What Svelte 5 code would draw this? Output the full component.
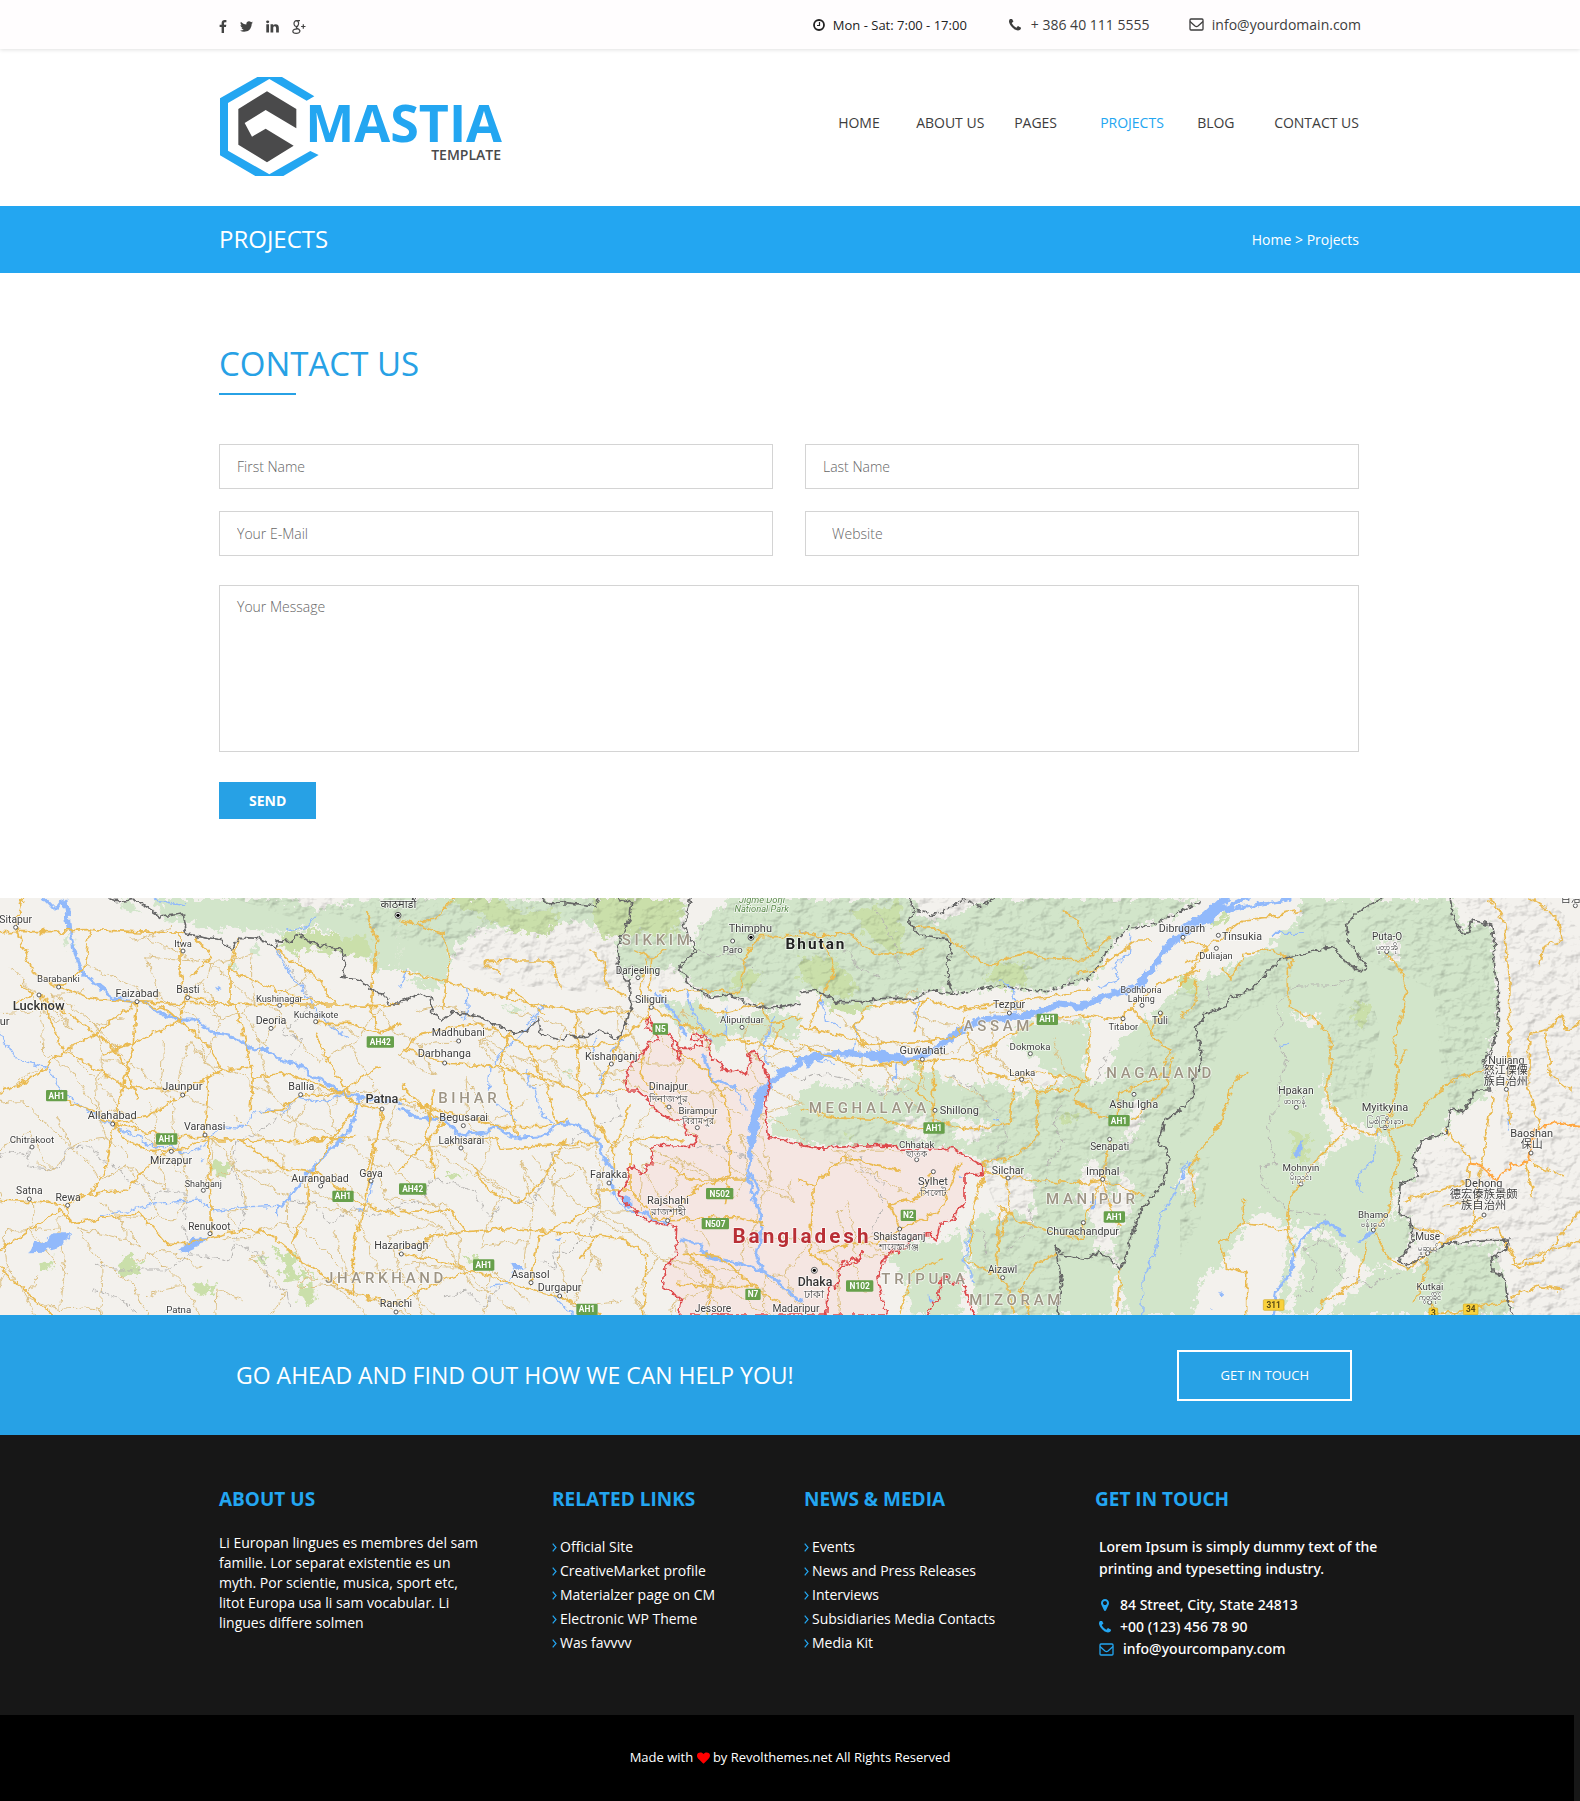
<script>
  const nav = ['HOME', 'ABOUT US', 'PAGES', 'PROJECTS', 'BLOG', 'CONTACT US'];
  const related = ['Official Site', 'CreativeMarket profile', 'Materialzer page on CM', 'Electronic WP Theme', 'Was favvvv'];
  const news = ['Events', 'News and Press Releases', 'Interviews', 'Subsidiaries Media Contacts', 'Media Kit'];

  const icons = {
    facebook: 'M1343 12v264h-157q-86 0-116 36t-30 108v189h293l-39 296h-254v759h-306v-759h-255v-296h255v-218q0-186 104-288.500t277-102.500q147 0 228 12z',
    twitter: 'M1684 408q-67 98-162 167 1 14 1 42 0 130-38 259.500t-115.500 248.500-184.500 210.500-258 146-323 54.500q-271 0-496-145 35 4 78 4 225 0 401-138-105-2-188-64.500t-114-159.500q33 5 61 5 43 0 85-11-112-23-185.500-111.500t-73.500-205.500v-4q68 38 146 41-66-44-105-115t-39-154q0-88 44-163 121 149 294.500 238.500t371.500 99.500q-8-38-8-74 0-134 94.500-228.500t228.500-94.500q140 0 236 102 109-21 205-78-37 115-142 178 93-10 186-50z',
    linkedin: 'M365 1414h231v-694h-231v694zm246-908q-1-52-36-86t-93-34-94.500 34-36.500 86q0 51 35.500 85.500t92.500 34.500h1q59 0 95-34.500t36-85.500zm585 908h231v-398q0-154-73-233t-193-79q-136 0-209 117h2v-101h-231q3 66 0 694h231v-388q0-38 7-56 15-35 45-59.500t74-24.500q116 0 116 157v371z',
    phone: 'M1600 1240q0 27-10 70.500t-21 68.500q-21 50-122 106-94 51-186 51-27 0-53-3.500t-57.500-12.500-47-14.500-55.500-20.500-49-18q-98-35-175-83-127-79-264-216t-216-264q-48-77-83-175-3-9-18-49t-20.500-55.500-14.500-47-12.500-57.500-3.500-53q0-92 51-186 56-101 106-122 25-11 68.500-21t70.500-10q14 0 21 3 18 6 53 76 11 19 30 54t35 63.500 31 53.500q3 4 17.500 25t21.500 35.500 7 28.500q0 20-28.500 50t-62 55-62 53-28.500 46q0 9 5 22.500t8.500 20.500 14 24 11.500 19q76 137 174 235t235 174q2 1 19 11.500t24 14 20.500 8.500 22.500 5q18 0 46-28.500t53-62 55-62 50-28.500q14 0 28.500 7t35.500 21.500 25 17.500q25 15 53.500 31t63.500 35 54 30q70 35 76 53 3 7 3 21z',
    marker: 'M1152 640q0-106-75-181t-181-75-181 75-75 181 75 181 181 75 181-75 75-181zm256 0q0 109-33 179l-364 774q-16 33-47.500 52t-67.500 19-67.500-19-46.500-52l-365-774q-33-70-33-179 0-212 150-362t362-150 362 150 150 362z',
    heart: 'M896 1664q-26 0-44-18l-624-602q-10-8-27.500-26t-55.500-65.500-68-97.500-53.500-121-23.500-138q0-220 127-344t351-124q62 0 126.500 21.500t120 58 95.500 68.500 76 68q36-36 76-68t95.500-68.500 120-58 126.500-21.500q224 0 351 124t127 344q0 221-229 450l-623 600q-18 18-44 18z'
  };

  // The map canvas is split in four sheets; every sheet lists its shapes in its own coordinates.
  const sheets = [
    {
      x: 0,
      green: ['460,24 840,24 900,40 960,60 1060,30 1200,24 1200,240 1130,240 1100,200 1040,150 960,110 880,120 800,130 700,110 640,120 580,100 500,90', '190,150 210,140 215,165 195,170', '750,170 775,165 780,190 755,195', '690,215 705,215 710,240 695,240', '360,30 400,40 420,70 370,60'],
      forest: ['840,130 950,120 1020,140 1110,140 1115,205 1030,195 940,175 890,190 850,175', '632,815 660,810 690,820 688,855 645,860', '352,1130 380,1090 425,1120 420,1145 365,1155', '572,1180 620,1180 655,1205 600,1215', '115,1125 165,1105 150,1145 120,1140', '820,1075 890,1100 885,1140 960,1160 870,1170 835,1150 850,1120', '895,1190 940,1180 945,1230 915,1250', '765,1100 795,1095 790,1120'],
      hills: ['700,24 1200,24 1200,150 1100,110 1000,70 900,90 800,60'],
      lake: ['85,1090 100,1060 140,1050 160,1030 212,1030 190,1065 150,1075 130,1088', '535,1085 570,1045 625,1040 600,1070 555,1088', '645,290 668,300 655,307', '600,810 614,812 606,818', '190,40 205,24 215,130 200,120'],
      river: ['130,24 165,60 190,30 210,130 225,190 250,250 300,295 340,325 400,335 440,340 480,370 540,390 590,390 640,430 700,440 760,480 800,475 850,515 890,520 930,555 1000,590 1030,612 1100,625 1200,640', '1075,625 1050,720 980,790 930,840 880,910 850,945'],
      stream: ['0,430 50,510 140,530 180,600 260,660 340,705 380,730 420,740 450,770 510,770 560,790 610,770 660,710 720,715 760,670 800,655 850,665 890,620 960,640 1030,612', '850,945 750,950 640,965 600,930 470,940 300,980', '830,180 860,240 910,300 960,380 1000,410 1050,445', '860,120 920,110 950,80', '1115,870 1110,920 1080,960', '830,945 830,980', '460,30 560,45'],
      border: ['330,24 360,35 400,28 485,80 550,72 560,132 610,140 665,150 695,180 718,142 775,145 832,175 828,152 870,155 893,130 935,160 1020,178 1038,215 1028,262 1080,270 1130,310 1150,312 1165,342 1200,342'],
      state: ['0,800 30,785 75,800 95,770 80,830 180,840 200,775 280,770 300,810 350,830 380,870 430,890 460,930 480,900 560,910 550,1000 570,1090', '740,950 700,840 710,760 830,690 890,630', '835,190 870,240 940,330 880,400 840,430 910,450 870,500', '280,1120 340,1140 500,1140 570,1095 690,1110 720,1000 740,950', '870,930 940,940 990,1005 1060,950 1110,980 1200,950', '280,1200 350,1220 420,1275', '710,1060 790,1100 810,1190 860,1200 870,1260'],
      road: ['45,115 70,24', '47,112 100,250 175,290 290,330 410,335 530,340 690,342 860,345 1000,345 1130,350 1200,340', '117,315 190,480 380,590 540,600', '0,125 160,125 270,118 400,125 550,130', '270,118 255,240 175,290', '117,315 215,380 350,480 420,630', '410,335 400,460 370,590 340,700', '411,335 290,430 190,485 90,570 0,605', '411,335 500,360 620,460 665,540 560,600 548,615 440,680 340,700', '540,130 540,240 560,320 540,390 400,460 310,490', '565,320 710,345 740,480 760,560 750,660', '690,340 690,240 710,150', '170,620 270,660 340,700 420,720 520,740 615,740 720,750 840,830 960,850 1060,930 1200,980', '615,740 625,560 665,540 760,530', '340,700 380,750 440,780 515,785 615,750 720,750', '340,700 320,830 270,910 200,945 90,935 0,930', '270,910 380,900 440,830 520,780', '200,945 215,1000 420,970 500,1060 560,1060 750,1015 825,1045 900,1110 1060,1215 1200,1240', '0,1080 180,960 215,1000', '625,740 630,860 635,1030', '1140,530 1030,605 1060,640 1150,660', '950,400 1050,400 1140,430 1200,400', '1140,430 1110,350 1130,150 1100,60', '690,240 830,300 980,345', '830,180 960,270 1000,340', '760,560 860,550 1030,610 900,615 840,660 780,665', '1060,660 990,760 930,860 920,960 880,1050', '1145,660 1110,860 1060,1080 1060,1215', '50,340 100,310 60,280', '590,150 640,200 570,260', '720,750 900,755 1060,740', '0,1135 90,1215 160,1275', '1150,670 1100,850', '1045,605 980,510 950,430'],
      labels: [['Sitapur', 47, 87, 31], ['Itwa', 549, 159, 28], ['Barabanki', 175, 265, 29], ['Lucknow', 116, 350, 39], ['ur', 14, 393, 33], ['Faizabad', 411, 309, 32], ['Basti', 564, 298, 31], ['Kushinagar', 838, 325, 28], ['Kuchaikote', 948, 373, 27], ['Deoria', 813, 390, 32], ['Jaunpur', 547, 590, 33], ['Allahabad', 337, 676, 33], ['Ballia', 904, 589, 32], ['Patna', 1146, 627, 38], ['Varanasi', 614, 709, 32], ['Chitrakoot', 96, 748, 29], ['Mirzapur', 513, 811, 32], ['Shahganj', 610, 880, 27], ['Aurangabad', 960, 864, 32], ['Gaya', 1113, 849, 32], ['Satna', 88, 902, 31], ['Rewa', 204, 921, 31], ['Renukoot', 628, 1008, 30], ['Hazaribagh', 1204, 1065, 32], ['Ranchi', 1188, 1241, 32], ['Patna', 536, 1258, 29], ['काठमाडौं', 1195, 42, 33]],
      regions: [['JHARKHAND', 1153, 1164]],
      dots: [[47, 112], [549, 183], [176, 291], [117, 315], [411, 335], [563, 323], [839, 346], [947, 395], [813, 415], [548, 615], [338, 702], [902, 614], [1146, 657], [615, 735], [96, 771], [514, 784], [610, 901], [962, 888], [1113, 873], [88, 927], [203, 946], [630, 1031], [1204, 1092], [1188, 1266]],
      capitals: [[1194, 76]],
      shields: [['AH1', 170, 617], ['AH42', 1141, 456], ['AH1', 500, 747], ['AH1', 1029, 919]]
    },
    {
      x: 1200,
      green: ['0,24 850,24 850,110 880,180 840,230 700,260 660,240 650,120 500,90 400,130 250,110 160,180 140,280 0,240', '840,230 880,180 900,100 1000,24 1200,24 1200,345 1100,355 1030,325 930,320 870,285', '300,350 380,350 360,370', '20,270 120,270 120,305 60,290', '780,330 900,340 1000,400 1080,360 1200,380 1200,440 1080,450 990,430 960,480 900,430 830,400', '1120,690 1200,640 1200,755 1110,735', '490,540 515,540 505,555'],
      forest: ['130,24 290,24 340,60 490,70 450,140 330,120 200,60', '580,24 850,24 840,110 790,150 720,120 660,145 590,130', '130,850 205,855 180,870 130,862', '180,1100 230,1095 235,1110 190,1115', '1000,240 1080,250 1050,300 1000,290', '1160,900 1180,900 1180,920 1160,920'],
      hills: ['0,24 870,24 850,110 890,180 840,230 800,300 690,280 600,310 480,300 300,280 220,240 120,180 0,150', '840,230 880,180 900,100 1000,24 1200,24 1200,345 1100,355 1030,325 930,320 870,285'],
      lake: ['665,915 690,920 692,955 675,945', '330,1115 375,1130 345,1145', '1070,600 1100,580 1080,680 1062,780 1052,750', '465,1045 485,1040 478,1060'],
      river: ['0,660 60,685 130,690 180,735 260,725 290,710 340,745 430,740 480,700 540,710 595,750 610,800 635,840 640,910', '730,970 800,1005', '840,1050 900,1065 920,1100 1000,1115 1080,1140 1130,1170 1200,1230', '1050,790 1045,870 1065,930 1085,980 1080,1050 1070,1100 1085,1140', '1060,930 1075,900 1050,850', '910,500 940,570 1000,590', '770,310 830,380 860,440'],
      wide: ['1200,525 1140,550 1100,590 1075,640 1060,700 1050,790'],
      stream: ['640,910 680,960 730,970', '430,345 400,390 360,440 310,480 280,520', '430,345 380,400', '860,300 880,370 930,450', '1000,590 1040,660', '200,290 205,360 190,390', '980,350 975,440', '0,290 20,240', '380,540 390,590 410,600 420,670 460,700', '270,530 265,600', '290,640 350,685', '1100,520 1090,470 1120,380', '590,440 580,490', '610,550 595,620', '450,1210 520,1275', '270,1190 330,1180 340,1140', '640,480 670,450'],
      border: ['0,335 65,310 95,330 95,370 125,390 160,365 240,380 340,430 385,422 415,385 425,435 485,450 500,435 555,440 600,420 655,448 680,400 695,340 690,280 655,240 655,170 690,80 695,40 650,24', '425,24 440,42 500,38 585,48 600,24', '870,24 850,110 890,180 840,230 865,280 930,322 985,315 1055,345 1105,355 1200,340'],
      state: ['0,940 70,940 90,870 160,880 220,900 270,985 310,930 400,935 440,860 460,790 560,720', '570,1030 600,930 590,860', '560,1030 500,1090 460,1080 470,1140 420,1110', '600,700 660,680 650,620 590,600', '890,770 960,770 1050,810', '130,1220 200,1200 250,1250 300,1190', '900,180 940,200 1000,190 1060,240', '910,110 900,150'],
      road: ['0,90 50,105 110,80 160,24', '50,105 130,130 150,200 140,260 130,360', '0,240 140,275 330,330 540,365 690,365', '0,495 60,430 240,400 390,470 540,470 650,460', '20,480 150,520 290,530 480,580 540,610 680,600', '330,430 300,520 340,680 350,740', '385,470 440,590 470,700', '530,370 530,470 540,610 590,700 640,780 640,860', '750,300 755,205 700,180', '755,205 800,180', '740,210 720,300 755,350 740,380 660,450 600,600', '755,350 840,400 1000,450 1080,460 1200,500', '780,300 1020,305 1040,190 1080,140 1200,140', '900,350 960,370 1080,340 1110,400 1200,380', '0,630 120,660 290,710 440,710 500,690', '10,590 100,680 130,700 0,840', '180,750 290,740 300,780 500,760 600,760', '220,830 260,900 360,940 430,870 500,750', '0,965 150,960 200,1025 330,1015 570,1035 680,1050 740,1100 730,1275', '0,1080 100,1040 200,1025', '0,1090 150,1120 330,1180 480,1220 600,1275', '390,1180 420,1040 600,940 590,900 690,900 760,980 800,990', '690,900 690,760 740,740 850,750', '690,650 640,780', '800,650 720,550 730,500', '830,480 920,540 980,630 990,740 985,860 970,940', '800,990 1000,980 1090,1000', '805,990 880,900 985,860', '810,830 880,870 985,870 1040,870', '850,1090 960,1100 1050,1180 1140,1240', '830,1180 920,1190 1050,1190', '920,1275 940,1160 860,1090', '1110,480 1150,400', '570,180 610,220 620,290 680,320', '300,250 250,220 330,210 450,210 480,290', '100,600 80,730 110,870', '320,330 330,300 430,370', '0,1240 100,1180 250,1130', '540,1110 590,1040'],
      labels: [['Madhubani', 175, 428, 32], ['Darbhanga', 133, 490, 33], ['Begusarai', 191, 682, 33], ['Lakhisarai', 184, 750, 30], ['Kishanganj', 634, 498, 32], ['Siliguri', 753, 328, 32], ['Darjeeling', 714, 240, 30], ['Thimphu', 1051, 114, 33], ['Paro', 998, 178, 29], ['Alipurduar', 1026, 389, 29], ['Dinajpur', 805, 590, 32], ['দিনাজপুর', 805, 624, 31], ['Birampur', 894, 661, 29], ['বিরামপুর', 893, 690, 27], ['Farakka', 626, 854, 32], ['Rajshahi', 804, 932, 33], ['রাজশাহী', 804, 965, 31], ['Asansol', 391, 1152, 32], ['Durgapur', 479, 1192, 32], ['Jessore', 939, 1254, 31], ['Madaripur', 1188, 1256, 31]],
      parks: [['Jigme Dorji', 1086, 29], ['National Park', 1085, 56]],
      regions: [['BIHAR', 203, 624], ['SIKKIM', 768, 148]],
      dots: [[176, 453], [134, 519], [190, 707], [183, 774], [634, 522], [754, 352], [714, 263], [998, 153], [1026, 412], [807, 651], [892, 713], [627, 879], [803, 992], [393, 1178], [479, 1218]],
      capitals: [[1053, 142]],
      shields: [['AH42', 38, 897], ['N5', 781, 417], ['N502', 959, 911], ['N507', 946, 1001], ['AH1', 251, 1125], ['AH1', 561, 1258], ['N7', 1059, 1213]]
    },
    {
      x: 2400,
      green: ['0,24 1200,24 1100,90 985,110 930,170 885,260 740,305 600,290 460,312 400,300 340,325 110,335 50,300 0,305', '0,600 60,580 130,590 200,570 260,610 330,560 400,540 470,590 600,580 660,610 690,590 780,600 800,560 740,540 700,500 620,450 680,400 860,390 870,450 850,560 880,590 920,560 960,450 1060,370 1140,290 1140,1275 980,1275 940,1060 930,900 880,800 850,830 820,1000 700,1040 700,870 620,820 560,820 460,775 280,770 0,765', '500,1010 560,960 600,1000 640,960 700,1000 760,1060 780,1275 530,1275 510,1130', '270,1100 330,1060 420,1060 480,1020 500,1100 480,1275 330,1275 320,1180', '60,320 230,330 190,365 90,360', '700,940 850,940 950,1140 930,1275 770,1275 720,1040'],
      forest: ['160,60 300,40 310,200 220,160', '560,260 600,215 680,230 680,280 620,300', '0,200 100,200 180,300 140,330 0,270', '90,340 225,345 190,370 90,365', '800,660 830,680 800,710 780,690', '185,775 235,775 230,795 185,790', '300,865 315,880 300,895', '340,520 370,520 360,555', '135,740 160,740 150,760'],
      hills: ['0,24 1180,24 1100,90 985,110 930,170 885,260 740,295 600,285 460,305 400,300 340,325 110,335 50,300 0,305', '480,620 700,600 760,560 830,640 960,560 1060,400 1140,300 1140,680 1095,700 1070,765 1105,790 1080,900 1030,960 962,1135 860,1108 780,1100 780,1275 540,1275 520,1130 600,980 540,830', '0,680 260,700 350,640 460,700 460,770 0,765'],
      bare: ['340,24 560,24 480,70 400,100 345,60', '300,690 370,680 400,700 380,760 280,715', '470,690 560,700 575,720 520,755 460,750', '640,560 690,590 660,620 620,600', '880,1080 895,1000 930,960 960,850 1000,880 990,960 920,1080', '870,590 905,450 945,460 920,560', '600,870 640,880 650,960 620,980 560,950', '1000,640 1040,640 1010,720 960,800'],
      lake: ['0,505 60,480 75,500 20,530', '230,480 300,490 310,515 240,520', '865,935 885,930 885,955 870,955', '475,860 485,858 482,868', '1010,270 1060,225 1070,240 1020,295', '385,1215 400,1230 390,1235'],
      wide: ['0,510 60,495 150,490 250,500 330,512 400,480 470,430 540,388 640,383 720,365 780,340 840,350 900,325 960,305 1020,285 1060,230 1110,160 1160,120 1240,70 1340,24'],
      stream: ['600,270 640,300 650,380', '990,130 985,190 940,230 960,270 900,290', '60,320 80,390 120,410', '170,400 160,480', '360,330 340,400', '100,520 0,500', '290,520 280,570', '1150,840 1130,900 1110,885', '1130,900 1080,980 1070,1080 1030,1160 1025,1275', '580,690 600,685', '515,1000 495,1110 520,1180'],
      border: ['0,308 50,300 110,335 200,335 250,325 340,325 400,300 460,312 440,250 445,195 460,190 440,145 360,135 325,95 345,60 325,24', '1140,660 1095,690 1070,765 1105,780 1100,850 1080,890 1030,950 1000,1020 985,1080 962,1135 900,1085 860,1108 795,1100 765,1065 775,1110 785,1180 770,1275'],
      dashed: ['460,312 600,288 740,305 870,262 885,240 930,170 985,115 1060,105 1200,35', '345,60 410,75 490,30 540,50 580,24'],
      state: ['0,570 60,550 150,570 240,610 340,600', '450,560 520,590 600,690 620,750 580,790', '180,800 190,840 250,880 240,980 210,1030', '880,590 930,480', '780,650 760,700 790,760 740,830 740,890', '500,1020 550,1020 560,1090', '690,960 700,1010 620,1080', '0,120 60,140 150,190 180,240 250,260', '230,60 280,150 300,240'],
      road: ['0,125 50,135 140,130 230,190 320,195 370,175', '60,135 105,240 60,330 30,410', '340,110 410,115 480,170 570,230 620,205 690,185 730,205 860,210 880,190 930,140', '790,60 830,90 870,180', '830,250 890,240 1010,150 1060,150', '0,410 90,430 200,460 370,455 470,440 500,380', '0,460 90,500 170,530 370,515 530,510 600,450 700,400', '185,380 200,350 380,330 480,360 560,355', '185,380 160,420 200,460', '370,330 340,430', '480,355 680,330 870,300', '720,390 860,375 950,390 1000,350 1080,280 1200,240', '530,510 550,540 640,570 700,540 790,560 850,570 820,630 900,680 960,690', '665,570 720,605 800,600 870,570', '550,540 600,560', '860,570 870,400', '640,590 630,700 520,720 400,690', '400,515 400,700 360,720 250,690 100,680 0,660', '370,515 350,600 400,650', '715,605 710,750 640,800 550,820 555,850', '555,850 700,870 840,880 905,870 1030,915', '555,860 520,940 510,1100', '620,870 630,950 590,1090', '905,870 850,1000 850,1050 740,1020 650,990 600,950 590,1160', '905,870 940,980 960,1010', '930,750 910,870', '950,690 960,610 1080,560 1110,480 1050,430 1085,370', '1000,690 1100,590 1120,500', '960,400 990,350 1060,430', '0,870 40,890 30,1090 100,1140', '40,890 130,800 300,845', '270,945 360,920 400,845', '270,945 300,1020 420,960 480,820', '300,1020 230,1060 150,1060 60,1090', '640,1275 620,1180 600,1160 500,1110', '690,1275 660,1200 700,1130 770,1090', '300,1270 340,1140 430,1110', '960,1140 950,1275', '500,430 530,490 600,450', '740,600 770,570'],
      labels: [['Tezpur', 627, 344, 32], ['Guwahati', 368, 482, 33], ['Dokmoka', 690, 470, 29], ['Lanka', 667, 546, 29], ['Shillong', 478, 662, 33], ['Chhatak', 350, 762, 29], ['ছাতক', 350, 790, 27], ['Sylhet', 399, 875, 33], ['সিলেট', 399, 907, 31], ['Silchar', 624, 840, 32], ['Shaistaganj', 298, 1040, 30], ['শায়েস্তাগঞ্জ', 298, 1070, 26], ['Dhaka', 45, 1176, 37], ['ঢাকা', 41, 1214, 32], ['Aizawl', 608, 1139, 30], ['Bodhboria', 1023, 298, 27], ['Lahing', 1024, 325, 27], ['Tuli', 1080, 391, 30], ['Titabor', 970, 408, 28], ['Ashu Igha', 1001, 643, 33], ['Senapati', 929, 769, 30], ['Imphal', 908, 843, 33], ['Churachandpur', 848, 1025, 32], ['Dibrugarh', 1146, 116, 32]],
      regions: [['ASSAM', 590, 408], ['MEGHALAYA', 203, 654], ['NAGALAND', 1077, 548], ['MANIPUR', 872, 925], ['TRIPURA', 370, 1167], ['MIZORAM', 645, 1230]],
      dots: [[628, 369], [367, 508], [691, 491], [665, 568], [405, 661], [350, 809], [400, 845], [624, 864], [299, 1017], [608, 1163], [1026, 346], [1081, 369], [969, 386], [1002, 613], [929, 748], [908, 868], [850, 998], [1149, 142]],
      capitals: [[43, 1141]],
      shields: [['AH1', 742, 388], ['AH1', 402, 714], ['AH1', 957, 692], ['N2', 325, 976], ['AH1', 943, 981], ['N102', 179, 1188]]
    },
    {
      x: 3540,
      green: ['360,24 820,24 850,130 875,95 935,110 945,220 955,400 910,515 935,600 850,665 810,655 800,730 730,750 700,800 715,858 660,885 655,970 690,985 700,1050 655,1110 560,1140 500,1060 420,1020 340,1000 320,1275 230,1275 190,1150 110,1130 60,1180 40,1275 0,1275 0,300 130,240 280,160 360,80', '780,1065 980,1060 935,1100 970,1160 995,1275 440,1275 520,1210 600,1130 700,1140', '380,1040 480,1060 500,1150 400,1275 340,1275 360,1150'],
      forest: ['520,345 550,335 570,370 540,415 520,380', '345,725 395,730 370,820 330,800', '80,100 140,75 140,100 100,110', '150,1190 165,1200 155,1205', '0,250 50,270 40,300 0,300'],
      hills: ['0,300 130,250 280,180 340,190 330,320 200,360 120,450 60,700 0,760', '550,40 800,24 850,130 930,110 950,220 955,400 910,515 935,600 810,655 780,500 760,300 540,200', '820,24 1100,24 1200,120 1200,1100 1000,1150 960,700 1000,400 960,200', '700,800 860,760 960,900 1200,900 1200,1275 1000,1275 985,1050 800,1060 680,1110 655,970', '540,200 600,420 560,620 460,640 440,420', '0,820 90,800 60,1000 0,1100', '360,40 520,40 500,150 350,190', '700,1080 960,1060 980,1275 800,1275'],
      bare: ['600,160 660,150 665,210 620,200', '430,560 450,640 510,700 590,710 610,740 520,740 420,820 350,880 330,1000 350,880 460,760 430,680', '620,730 640,770 600,760', '40,1275 60,1170 120,1130 200,1000 240,960 310,1000 330,1010 290,1275', '0,860 50,840 40,900 0,900', '190,60 300,60 360,70 300,100 230,150 100,170 60,240 0,260 0,200', '320,370 420,380 400,410', '640,880 650,960 630,1000'],
      lake: ['345,805 348,775 362,752 372,752 362,795 352,808', '118,1210 125,1204 133,1211 125,1218', '88,1258 94,1254 98,1260', '583,725 600,722 592,740', '80,60 120,24 150,24 90,100 40,115'],
      wide: ['0,120 70,80 130,24'],
      river: ['540,1055 580,1020', '490,1040 460,1010 430,995 370,1040 345,1090 330,1150 290,1200 280,1275', '80,70 180,55 260,40 330,24'],
      stream: ['590,760 580,800 555,835 530,870 545,910', '0,860 20,820', '280,130 370,130', '985,680 985,720', '300,470 320,460', '0,870 30,820'],
      border: ['610,24 540,60 500,100 505,155 565,235 545,245 495,215 460,170 350,195 290,215 240,270 210,300 150,325 130,355 80,370 45,420 60,460 65,520 40,570 40,620 0,660', '810,24 825,95 848,130 865,128 875,90 935,105 945,170 940,220 955,300 955,400 935,480 910,515 935,600 890,600 850,665 810,655 800,730 730,750 700,800 715,858 660,885 655,970 690,985 700,1050 655,1110 680,1130 745,1090 800,1060 870,1055 985,1050 980,1080 935,1100 940,1145 970,1155 980,1210 995,1275'],
      state: ['345,285 450,285 530,260', '345,285 290,350 310,400 280,440 320,500 300,560 300,650 265,690 270,770 290,820 240,830 260,900 330,965 440,975 420,1050 370,1080 410,1120 400,1200 350,1220', '420,1050 500,1090 470,1150 570,1185 660,1150', '80,280 90,330'],
      road: ['620,190 660,240 680,310 660,390 640,460 655,540 640,650 620,710', '620,710 580,735 500,710 465,670 435,600 455,530 450,430 390,380 325,350 325,240 340,215 280,180 200,190 150,270 130,230', '620,720 660,790 635,890 630,960 585,1020', '585,1030 620,1100 680,1135 740,1095 780,1060 910,985', '560,1060 530,1180 430,1230 410,1275', '740,1110 730,1170 700,1230', '630,720 700,700 740,640 820,570 930,530', '500,720 420,800 330,920 320,1020', '200,545 160,580 120,700 30,830 50,950', '190,930 190,1000 320,1020 350,1100', '190,1000 120,1060 140,1130 200,1150 200,1275', '930,24 970,90 990,280 985,560 980,600 990,700', '1050,24 1130,80 1150,150 1090,170 1080,220', '1045,600 1050,430 1100,420 1145,370 1160,420 1200,400', '1045,590 1080,710', '670,930 860,880 870,800 800,720', '780,1060 860,1030 950,1010 1010,1120 1200,1050', '1000,1130 1080,1120 1200,960', '1060,820 1150,860', '1040,820 1060,920', '680,480 660,520', '0,150 80,170 0,290', '20,220 100,160 190,90 280,80 360,60', '700,1010 790,1030', '990,1220 1080,1190 1150,1200', '50,270 40,350 0,380', '870,930 790,950', '870,1040 940,620', '890,1250 1000,1230', '1100,430 1110,550 1170,600', '750,1275 750,1240 780,1270 860,1265'],
      highway: ['865,820 900,825 950,870 990,830 1050,815 1060,720 1120,700 1200,710'],
      labels: [['Tinsukia', 186, 138, 32], ['Duliajan', 108, 197, 28], ['Puta-O', 621, 138, 30], ['ပူတာအို', 621, 168, 25], ['Nujiang', 979, 510, 32], ['怒江傈僳', 977, 541, 33], ['族自治州', 977, 573, 33], ['Hpakan', 348, 600, 31], ['ဖားကန့်', 346, 632, 25], ['Myitkyina', 615, 652, 33], ['မြစ်ကြီးနား', 615, 690, 27], ['Baoshan', 1055, 730, 33], ['保山', 1055, 763, 33], ['Mohnyin', 363, 831, 29], ['မိုးညှင်း', 363, 860, 25], ['Dehong', 911, 879, 33], ['德宏傣族景颇', 911, 913, 34], ['族自治州', 911, 947, 34], ['Bhamo', 580, 973, 29], ['ဗန်းမော်', 580, 1000, 25], ['Muse', 743, 1040, 30], ['မူဆယ်', 743, 1073, 25], ['Kutkai', 750, 1189, 29], ['ကွတ်ခိုင်', 750, 1218, 25], ['自治', 1172, 24, 30]],
      regions: [],
      dots: [[115, 136], [109, 175], [620, 185], [979, 598], [349, 652], [615, 713], [1053, 789], [363, 882], [912, 975], [580, 1020], [743, 1090], [749, 1237], [1186, 47]],
      shields: [],
      yellow: [['311', 281, 1245], ['34', 872, 1258], ['3', 760, 1270]]
    }
  ];

  const country = 'M2035 1275L2045 1230 1990 1190 1995 1130 2030 1095 2028 1050 2030 1010 1975 1000 1940 990 1910 965 1875 940 1855 910 1870 890 1890 860 1885 835 1905 832 1920 850 1935 848 1940 825 1955 825 1960 765 2030 768 2080 770 2095 740 2060 735 2050 690 2015 690 1970 665 1940 625 1910 600 1880 600 1875 565 1895 520 1930 490 1945 460 1975 450 1960 420 1935 415 1950 375 1955 400 1970 430 1985 425 2020 440 2015 470 2030 480 2035 510 2042 490 2025 455 2045 475 2070 475 2085 465 2110 470 2105 450 2075 455 2080 430 2100 440 2110 428 2120 450 2130 450 2125 475 2135 505 2160 515 2170 540 2200 545 2215 540 2240 555 2240 530 2255 520 2245 490 2265 485 2290 520 2295 545 2310 580 2295 640 2305 740 2340 745 2400 765 2450 775 2550 770 2680 765 2700 778 2860 775 2890 795 2945 825 2950 855 2895 850 2895 940 2870 960 2865 985 2820 1000 2810 1050 2785 1030 2740 1040 2720 1070 2690 1085 2680 1080 2650 1105 2640 1150 2630 1160 2640 1200 2650 1240 2665 1275Z';
  const districts = 'M2780 1275L2800 1240 2815 1235 2820 1170 2840 1160 2860 1185 2885 1160 2905 1230 2925 1275M2480 1275L2485 1200 2515 1180 2520 1130 2540 1125 2550 1105 2570 1110 2590 1080 2570 1120 2550 1125 2530 1110 2520 1125';

  // Local lanes: a repeatable jittered mesh, dense on the plain and absent in the mountains.
  let seed = 7;
  const rand = () => {
    seed = (seed * 16807) % 2147483647;
    return seed / 2147483647;
  };
  const step = 92;
  const nodes = [];
  for (let r = 0; r < 15; r++) {
    nodes.push([]);
    for (let c = 0; c < 36; c++) {
      nodes[r].push([Math.round(c * step + (rand() - 0.5) * 84), Math.round(24 + r * step + (rand() - 0.5) * 84)]);
    }
  }
  const onPlain = (x, y) => {
    if (x < 1200) return y > 130 + Math.max(0, x - 800) / 2;
    if (x < 2000) return y > 340;
    if (x < 2640) return y > 350 && !(y > 560 && y < 770 && x > 2320);
    return y > 320 && y < 560 && x < 3300;
  };
  const lanes = [];
  for (let r = 0; r < 14; r++) {
    for (let c = 0; c < 35; c++) {
      const a = nodes[r][c];
      for (const b of [nodes[r][c + 1], nodes[r + 1][c], nodes[r + 1][c + 1]]) {
        const keep = rand() < 0.42;
        const bx = Math.round((a[0] + b[0]) / 2 + (rand() - 0.5) * 36);
        const by = Math.round((a[1] + b[1]) / 2 + (rand() - 0.5) * 36);
        if (keep && onPlain(a[0], a[1])) lanes.push(`M${a[0]} ${a[1]}Q${bx} ${by} ${b[0]} ${b[1]}`);
      }
    }
  }
  const lanePath = lanes.join('');
  const rank = (size) => (size > 35 ? 'big' : '');
</script>

{#snippet glyph(name, box = '0 0 1792 1792')}
  <svg class="glyph" viewBox={box} aria-hidden="true"><path d={icons[name]} /></svg>
{/snippet}

{#snippet envelope()}
  <svg class="glyph wide-glyph" viewBox="0 0 15 13" aria-hidden="true">
    <rect x="1" y="1" width="13" height="11" rx="1" fill="none" stroke="currentColor" stroke-width="1.3" />
    <path d="M1 3.500L6 8q1.500 1.200 3 0L14 3.500" fill="none" stroke="currentColor" stroke-width="1.300" />
  </svg>
{/snippet}

{#snippet lines(list, cls)}
  {#each list ?? [] as points}<polyline class={cls} {points} />{/each}
{/snippet}

{#snippet areas(list, cls)}
  {#each list ?? [] as points}<polygon class={cls} {points} />{/each}
{/snippet}

<div class="topbar">
  <div class="wrap bar">
    <div class="social">
      <a href="#facebook" aria-label="Facebook"><svg viewBox="479 0 864 1664" aria-hidden="true"><path d={icons.facebook} /></svg></a>
      <a href="#twitter" aria-label="Twitter"><svg class="w13" viewBox="108 256 1576 1280" aria-hidden="true"><path d={icons.twitter} /></svg></a>
      <a href="#linkedin" aria-label="LinkedIn"><svg class="w13" viewBox="340 370 1100 1060" aria-hidden="true"><path d={icons.linkedin} /></svg></a>
      <a href="#google" aria-label="Google Plus">
        <svg class="w14" viewBox="0 0 14 14" aria-hidden="true">
          <g fill="none" stroke="currentColor" stroke-width="1.2">
            <ellipse cx="4.300" cy="3.600" rx="2.300" ry="2.900" />
            <path d="M4 .7h4M6 6Q3 7.500 5.300 8.400T8 11Q7.500 13.400 4.200 13.400T.8 11.200Q1 9 5.600 8.800" />
            <path d="M11.300 4.300v4.400M9.100 6.500h4.400" />
          </g>
        </svg>
      </a>
    </div>
    <div class="contacts">
      <span class="hours">
        <svg class="glyph" viewBox="0 0 12 12" aria-hidden="true"><circle cx="6" cy="6" r="5" fill="none" stroke="currentColor" stroke-width="1.800" /><path d="M6.500 3v3.500H4" fill="none" stroke="currentColor" stroke-width="1.200" /></svg>
        Mon - Sat: 7:00 - 17:00
      </span>
      <span class="tel">{@render glyph('phone', '192 256 1408 1280')}+ 386 40 111 5555</span>
      <a href="mailto:info@yourdomain.com">{@render envelope()}info@yourdomain.com</a>
    </div>
  </div>
</div>

<header class="wrap header">
  <a class="logo" href="#home" aria-label="Mastia Template">
    <svg viewBox="0 0 283 100" aria-hidden="true">
      <g transform="scale(.3333) translate(-57 -231)">
        <path fill="#23a6f1" d="M60 295L172 231H246L343 289 320 302 208 237 84 309V452L208 523 331 453 356 465 250 528H166L60 466Z" />
        <path fill="#4a4a4b" d="M115 327L201 274 289 327V385L197 330 134 369 156 410 197 386 281 437 201 487 115 434Z" />
      </g>
      <text class="brand" x="283" y="65">MASTIA</text>
      <text class="tag" x="282" y="83">TEMPLATE</text>
    </svg>
  </a>
  <nav>
    {#each nav as item}
      <a href="#{item.toLowerCase().replace(' ', '-')}" class:active={item === 'PROJECTS'}>{item}</a>
    {/each}
  </nav>
</header>

<div class="titlebar">
  <div class="wrap bar">
    <h1>PROJECTS</h1>
    <div class="crumbs"><a href="#home">Home</a> &gt; <span>Projects</span></div>
  </div>
</div>

<main class="wrap">
  <h2>CONTACT US</h2>
  <form>
    <div class="pair">
      <input type="text" placeholder="First Name" aria-label="First Name" />
      <input type="text" placeholder="Last Name" aria-label="Last Name" />
      <input type="email" placeholder="Your E-Mail" aria-label="Your E-Mail" />
      <input class="site" type="url" placeholder="Website" aria-label="Website" />
    </div>
    <textarea placeholder="Your Message" aria-label="Your Message"></textarea>
    <button type="button">SEND</button>
  </form>
</main>

<svg class="map" viewBox="0 24 4740 1251" preserveAspectRatio="xMidYMid slice" role="img" aria-label="Map of Bangladesh and its neighbours">
  <defs>
    <filter id="relief" x="0" y="0" width="100%" height="100%" color-interpolation-filters="sRGB">
      <feTurbulence type="fractalNoise" baseFrequency="0.022 0.03" numOctaves="4" seed="4" result="noise" />
      <feDiffuseLighting in="noise" surfaceScale="9" diffuseConstant="1.2" lighting-color="#ffffff" result="light">
        <feDistantLight azimuth="225" elevation="58" />
      </feDiffuseLighting>
      <feComposite in="light" in2="SourceGraphic" operator="in" />
    </filter>
    <filter id="rough" x="-5%" y="-5%" width="110%" height="110%">
      <feTurbulence type="fractalNoise" baseFrequency="0.05" numOctaves="3" seed="9" />
      <feDisplacementMap in="SourceGraphic" scale="60" xChannelSelector="R" yChannelSelector="G" />
    </filter>
    <filter id="wiggle" x="-5%" y="-5%" width="110%" height="110%">
      <feTurbulence type="fractalNoise" baseFrequency="0.04" numOctaves="3" seed="2" />
      <feDisplacementMap in="SourceGraphic" scale="26" xChannelSelector="R" yChannelSelector="G" />
    </filter>
    <filter id="jagged" x="-5%" y="-5%" width="110%" height="110%">
      <feTurbulence type="fractalNoise" baseFrequency="0.06" numOctaves="2" seed="5" />
      <feDisplacementMap in="SourceGraphic" scale="22" xChannelSelector="R" yChannelSelector="G" />
    </filter>
  </defs>
  <rect class="land" x="0" y="0" width="4740" height="1300" />
  <g filter="url(#rough)">
    {#each sheets as s}<g transform="translate({s.x} 0)">{@render areas(s.green, 'green')}</g>{/each}
    {#each sheets as s}<g transform="translate({s.x} 0)">{@render areas(s.forest, 'forest')}{@render areas(s.bare, 'land')}</g>{/each}
  </g>
  <path class="country" d={country} />
  <g class="relief" filter="url(#relief)">
    {#each sheets as s}<g transform="translate({s.x} 0)">{@render areas(s.hills, 'hill')}</g>{/each}
  </g>
  <g filter="url(#wiggle)">
    <path class="lane" d={lanePath} />
    {#each sheets as s}
      <g transform="translate({s.x} 0)">
        {@render lines(s.state, 'state')}
        {@render lines(s.stream, 'stream')}
        {@render lines(s.river, 'river')}
        {@render lines(s.wide, 'wide')}
        {@render areas(s.lake, 'lake')}
        {@render lines(s.road, 'road')}
        {@render lines(s.highway, 'highway')}
      </g>
    {/each}
  </g>
  <g filter="url(#jagged)">
    <path class="outline" d={country} />
    <path class="outline" d={districts} />
    {#each sheets as s}
      <g transform="translate({s.x} 0)">
        {@render lines(s.border, 'border')}
        {@render lines(s.dashed, 'border dashed')}
      </g>
    {/each}
  </g>
  {#each sheets as s}
    <g transform="translate({s.x} 0)">
      {#each s.regions as [name, x, y]}<text class="region" x={x + 5} y={y + 16}>{name}</text>{/each}
      {#each s.dots as [cx, cy]}<circle class="dot" {cx} {cy} r="6" />{/each}
      {#each s.capitals ?? [] as [cx, cy]}
        <circle class="dot" {cx} {cy} r="9" /><circle {cx} {cy} r="5" />
      {/each}
      {#each s.parks ?? [] as [name, x, y]}<text class="park" {x} y={y + 9}>{name}</text>{/each}
      {#each s.labels as [name, x, y, size]}<text class="town {rank(size)}" {x} y={y + 11} font-size={size}>{name}</text>{/each}
      {#each s.shields as [name, x, y]}
        <rect class="shield" x={x - name.length * 9 - 5} y={y - 17} width={name.length * 18 + 10} height="34" rx="4" />
        <text class="code" {x} y={y + 9}>{name}</text>
      {/each}
      {#each s.yellow ?? [] as [name, x, y]}
        <rect class="plate" x={x - name.length * 9 - 4} y={y - 16} width={name.length * 18 + 8} height="32" rx="3" />
        <text class="code dark" {x} y={y + 9}>{name}</text>
      {/each}
    </g>
  {/each}
  <text class="nation" x="2448" y="176">Bhutan</text>
  <text class="nation home" x="2406" y="1060">Bangladesh</text>
</svg>

<section class="cta">
  <div class="wrap bar">
    <p>GO AHEAD AND FIND OUT HOW WE CAN HELP YOU!</p>
    <button type="button">GET IN TOUCH</button>
  </div>
</section>

<footer>
  <div class="wrap columns">
    <section>
      <h3>ABOUT US</h3>
      <p class="about">Li Europan lingues es membres del sam familie. Lor separat existentie es un myth. Por scientie, musica, sport etc, litot Europa usa li sam vocabular. Li lingues differe solmen</p>
    </section>
    {#each [['RELATED LINKS', related], ['NEWS & MEDIA', news]] as [title, items]}
      <section>
        <h3>{title}</h3>
        <ul>
          {#each items as item}
            <li>
              <a href="#{item.toLowerCase().replaceAll(' ', '-')}">
                <svg class="angle" viewBox="0 0 5 9" aria-hidden="true"><path d="M.7.7L4 4.500.7 8.300" fill="none" stroke="currentColor" stroke-width="1.200" /></svg>{item}
              </a>
            </li>
          {/each}
        </ul>
      </section>
    {/each}
    <section class="touch">
      <h3>GET IN TOUCH</h3>
      <p>Lorem Ipsum is simply dummy text of the<br />printing and typesetting industry.</p>
      <address>
        <span>{@render glyph('marker', '384 128 1024 1536')}84 Street, City, State 24813</span>
        <span>{@render glyph('phone', '192 256 1408 1280')}+00 (123) 456 78 90</span>
        <a href="mailto:info@yourcompany.com">{@render envelope()}info@yourcompany.com</a>
      </address>
    </section>
  </div>
  <div class="legal">
    Made with <svg viewBox="0 128 1792 1536" role="img" aria-label="love"><path d={icons.heart} /></svg> by Revolthemes.net All Rights Reserved
  </div>
</footer>

<style>
  :global(body) {
    background: #fff;
    color: #3d3d3d;
    font-family: 'Open Sans', 'Noto Sans', sans-serif;
    font-size: 14px;
    line-height: 20px;
  }
  a {
    color: inherit;
    text-decoration: none;
  }
  h1, h2, h3, p, ul {
    margin: 0;
    padding: 0;
    font-weight: 400;
  }
  .wrap {
    box-sizing: border-box;
    max-width: 1142px;
    margin: 0 auto;
    padding-right: 2px;
  }
  .bar {
    display: flex;
    align-items: center;
    justify-content: space-between;
  }
  .topbar {
    position: relative;
    background: #fffdfe;
    box-shadow: 0 1px 4px rgba(0, 0, 0, 0.12);
  }
  .topbar .bar {
    min-height: 49px;
    padding-right: 0;
  }
  .social {
    display: flex;
    align-items: center;
    gap: 13px;
    padding-top: 4px;
  }
  .social a {
    display: flex;
  }
  .social svg {
    width: 8px;
    height: 13px;
    fill: #444;
    color: #444;
  }
  .social .w13 {
    width: 13px;
  }
  .social .w14 {
    width: 14px;
    height: 14px;
  }
  .contacts {
    display: grid;
    grid-template-columns: 196px 180px auto;
  }
  .contacts > * {
    display: flex;
    align-items: center;
  }
  .glyph {
    flex: none;
    width: 12px;
    height: 12px;
    margin-right: 8px;
    fill: currentColor;
  }
  .wide-glyph {
    width: 15px;
    height: 13px;
  }
  .hours {
    color: #222;
    font-size: 13px;
  }
  .tel .glyph {
    margin-right: 10px;
  }
  .header {
    display: flex;
    justify-content: space-between;
    min-height: 157px;
  }
  .logo svg {
    display: block;
    width: 283px;
    height: 100px;
    margin-top: 28px;
  }
  .brand {
    fill: #23a6f1;
    font-size: 52px;
    font-weight: 700;
    text-anchor: end;
  }
  .tag {
    fill: #4a4a4b;
    font-size: 14px;
    font-weight: 600;
    text-anchor: end;
  }
  nav {
    display: grid;
    grid-template-columns: 78px 98px 86px 97px 77px auto;
    align-self: flex-start;
    margin-top: 64px;
  }
  nav .active {
    color: #23a6f1;
  }
  .titlebar {
    background: #23a6f1;
    color: #fff;
  }
  .titlebar .bar {
    min-height: 67px;
  }
  h1 {
    font-size: 24px;
    line-height: 32px;
    padding-bottom: 2px;
  }
  main {
    padding-top: 69px;
    padding-bottom: 79px;
  }
  h2 {
    color: #27a1e5;
    font-size: 33px;
    line-height: 44px;
    padding-bottom: 6px;
  }
  h2::after {
    content: '';
    display: block;
    width: 77px;
    height: 2px;
    margin-top: 7px;
    margin-bottom: -8px;
    background: #27a1e5;
  }
  form {
    padding-top: 51px;
  }
  .pair {
    display: grid;
    grid-template-columns: 1fr 1fr;
    gap: 22px 32px;
  }
  input, textarea {
    box-sizing: border-box;
    width: 100%;
    padding: 0 17px;
    border: 1px solid #d4d4d4;
    border-radius: 0;
    background: #fff;
    font: 300 14px/20px 'Open Sans', sans-serif;
    outline: none;
  }
  input {
    height: 45px;
  }
  .site {
    padding-left: 26px;
  }
  textarea {
    display: block;
    height: 167px;
    margin-top: 29px;
    padding-top: 11px;
    resize: none;
  }
  ::placeholder {
    color: #666;
    opacity: 1;
  }
  form button {
    display: block;
    margin-top: 30px;
    padding: 9px 30px 8px;
    border: 0;
    background: #27a1e5;
    color: #fff;
    font: 700 14px/20px 'Open Sans', sans-serif;
  }
  .map {
    display: block;
    width: 100%;
    height: 417px;
    font-family: Roboto, 'Noto Sans CJK SC', 'Noto Sans', sans-serif;
  }
  .land {
    fill: #f3f1ed;
  }
  .green {
    fill: #d2e5ca;
  }
  .forest {
    fill: #cadfaa;
  }
  .hill {
    fill: #fff;
  }
  .relief {
    mix-blend-mode: multiply;
    opacity: 0.38;
  }
  .lane, .road, .highway, .stream, .river, .wide, .state, .border, .outline {
    fill: none;
    stroke-linejoin: round;
    stroke-linecap: round;
  }
  .lane {
    stroke: #dcc084;
    stroke-width: 3;
  }
  .road {
    stroke: #eaba50;
    stroke-width: 5;
  }
  .highway {
    stroke: #ffa640;
    stroke-width: 6;
  }
  .stream {
    stroke: #91b9fb;
    stroke-width: 4;
  }
  .river {
    stroke: #91b9fb;
    stroke-width: 9;
  }
  .wide {
    stroke: #91b9fb;
    stroke-width: 18;
  }
  .lake {
    fill: #91b9fb;
  }
  .state {
    stroke: #b5b3b0;
    stroke-width: 3;
    stroke-dasharray: 18 9;
  }
  .border {
    stroke: #666;
    stroke-width: 5;
  }
  .dashed {
    stroke-dasharray: 15 10;
  }
  .country {
    fill: #f5e6e2;
  }
  .outline {
    stroke: #dd4a4c;
    stroke-width: 5;
  }
  .map text {
    text-anchor: middle;
    paint-order: stroke;
    stroke: rgba(255, 255, 255, 0.75);
    stroke-width: 5;
    stroke-linejoin: round;
  }
  .town {
    fill: #3c3c3c;
  }
  .town.big {
    fill: #333;
    font-weight: 500;
  }
  .dot {
    fill: #fff;
    stroke: #555;
    stroke-width: 3;
  }
  .region {
    fill: #9d9484;
    font-size: 45px;
    font-weight: 500;
    letter-spacing: 11px;
  }
  .park {
    fill: #5b8b4b;
    font-size: 28px;
    font-style: italic;
  }
  .shield {
    fill: #67a04b;
  }
  .plate {
    fill: #f9d13c;
    stroke: #d5ac25;
    stroke-width: 2;
  }
  .map .code {
    fill: #fff;
    stroke: none;
    font-size: 25px;
    font-weight: 700;
  }
  .map .dark {
    fill: #5a4a14;
  }
  .nation {
    fill: #222;
    font-size: 46px;
    font-weight: 700;
    letter-spacing: 6px;
  }
  .home {
    fill: #b92f35;
    font-size: 62px;
    letter-spacing: 9px;
  }
  .cta {
    background: #27a1e5;
    color: #fff;
  }
  .cta .bar {
    min-height: 120px;
    padding-left: 17px;
    padding-right: 9px;
  }
  .cta p {
    font-size: 23px;
    line-height: 32px;
  }
  .cta button {
    padding: 13px 41px 14px;
    border: 2px solid #fff;
    background: none;
    color: #fff;
    font: 400 13px/20px 'Open Sans', sans-serif;
  }
  footer {
    background: #171717;
    color: #fff;
  }
  .columns {
    display: grid;
    grid-template-columns: minmax(0, 333fr) minmax(0, 252fr) minmax(0, 291fr) minmax(0, 264fr);
    min-height: 280px;
    padding-top: 50px;
  }
  h3 {
    color: #23a6f1;
    font-size: 19px;
    font-weight: 700;
    line-height: 28px;
  }
  .about {
    max-width: 264px;
    padding-top: 20px;
  }
  ul {
    padding-top: 22px;
    list-style: none;
    line-height: 24px;
  }
  li a {
    display: flex;
    align-items: center;
  }
  .angle {
    width: 5px;
    height: 9px;
    margin-right: 3px;
    color: #23a6f1;
  }
  .touch {
    font-family: 'Noto Sans', 'Open Sans', sans-serif;
  }
  .touch h3 {
    font-family: 'Open Sans', sans-serif;
  }
  .touch p {
    padding: 23px 0 0 4px;
    font-weight: 500;
    line-height: 22px;
    white-space: nowrap;
  }
  address {
    display: grid;
    padding: 14px 0 0 4px;
    font-style: normal;
    font-weight: 500;
    line-height: 22px;
  }
  address > * {
    display: flex;
    align-items: center;
  }
  address .glyph {
    margin-right: 9px;
    color: #23a6f1;
  }
  .legal {
    margin-right: 6px;
    padding: 31px 0 33px 6px;
    background: #000;
    font-size: 13px;
    line-height: 22px;
    text-align: center;
  }
  .legal svg {
    width: 13px;
    height: 12px;
    fill: #f00;
    vertical-align: -2px;
  }
  @media (max-width: 1180px) {
    .wrap {
      padding-left: 20px;
      padding-right: 20px;
    }
    .header {
      flex-direction: column;
      padding-bottom: 20px;
    }
    nav {
      display: flex;
      flex-wrap: wrap;
      gap: 24px;
      margin-top: 20px;
    }
    .columns {
      grid-template-columns: repeat(auto-fit, minmax(270px, 1fr));
    }
  }
</style>
